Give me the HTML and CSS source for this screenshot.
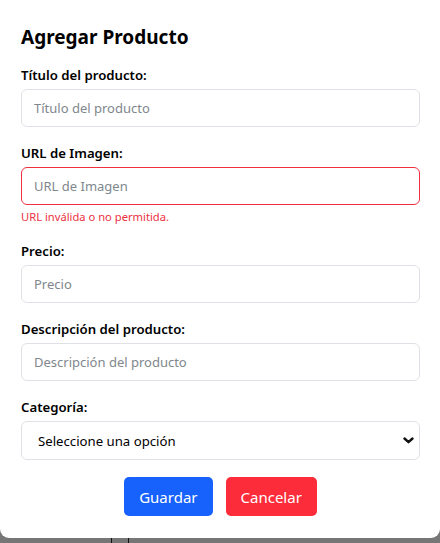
FILE: index.html
```html
<!DOCTYPE html>
<html lang="es">
<head>
<meta charset="utf-8">
<title>Agregar Producto</title>
<link rel="stylesheet" href="styles.css">
</head>
<body>
<div class="modal">
  <h2 class="title">Agregar Producto</h2>
  <form class="form">
    <div class="field">
      <label class="label">Título del producto:</label>
      <input class="control" type="text" placeholder="Título del producto">
    </div>
    <div class="field">
      <label class="label">URL de Imagen:</label>
      <input class="control invalid" type="text" placeholder="URL de Imagen">
      <div class="error">URL inválida o no permitida.</div>
    </div>
    <div class="field">
      <label class="label">Precio:</label>
      <input class="control" type="text" placeholder="Precio">
    </div>
    <div class="field">
      <label class="label">Descripción del producto:</label>
      <input class="control" type="text" placeholder="Descripción del producto">
    </div>
    <div class="field">
      <label class="label">Categoría:</label>
      <div class="select">
        <span>Seleccione una opción</span>
        <svg class="chev" width="11" height="7" viewBox="0 0 11 7"><path d="M1.5 1.5 L5.5 5.2 L9.5 1.5" fill="none" stroke="#111" stroke-width="2.4" stroke-linecap="round" stroke-linejoin="round"/></svg>
      </div>
    </div>
    <div class="actions">
      <button type="button" class="btn btn-primary">Guardar</button>
      <button type="button" class="btn btn-danger">Cancelar</button>
    </div>
  </form>
</div>
<div class="backdrop"></div>
</body>
</html>
```
FILE: styles.css
```css
* { box-sizing: border-box; }
html, body { margin: 0; padding: 0; }
body {
  width: 440px;
  height: 543px;
  background: #767676;
  font-family: "Noto Sans", "Open Sans", sans-serif;
  color: #212529;
  overflow: hidden;
}
.modal {
  background: #fff;
  height: 538px;
  border-radius: 0 0 9px 9px;
  padding: 24px 20px 0 21px;
}
.title {
  margin: 0 0 14px 0;
  font-size: 19px;
  font-weight: 700;
  line-height: 27px;
  color: #000;
}
.form { display: flex; flex-direction: column; }
.field { display: flex; flex-direction: column; margin-bottom: 16px; }
.label {
  font-size: 13.2px;
  font-weight: 600;
  line-height: 20px;
  margin-bottom: 4px;
  color: #000;
}
.control {
  height: 38px;
  width: 100%;
  border: 1px solid #dee2e6;
  border-radius: 6px;
  padding: 0 12px;
  font-family: inherit;
  font-size: 13px;
  color: #212529;
  background: #fff;
  outline: none;
}
.control::placeholder { color: #80878d; }
.control.invalid { border-color: #f0303f; }
.error {
  margin-top: 4px;
  font-size: 11.2px;
  line-height: 16px;
  color: #ec2f3e;
}
.select {
  height: 39px;
  border: 1px solid #dee2e6;
  border-radius: 6px;
  padding: 0 5px 0 16px;
  display: flex;
  align-items: center;
  justify-content: space-between;
  font-size: 13.2px;
  color: #000;
}
.actions {
  display: flex;
  justify-content: center;
  gap: 13px;
  margin-top: 1px;
}
.btn {
  height: 39px;
  border: none;
  border-radius: 5px;
  font-family: inherit;
  font-size: 15px;
  color: #fff;
  padding: 0 15px;
}
.btn-primary { background: #1761fd; }
.btn-danger { background: #fd2c3a; }
.backdrop {
  height: 5px;
  background: linear-gradient(to right, #767676 111px, #111 111px, #111 112px, #767676 112px, #767676 128px, #111 128px, #111 129px, #767676 129px);
}
```
